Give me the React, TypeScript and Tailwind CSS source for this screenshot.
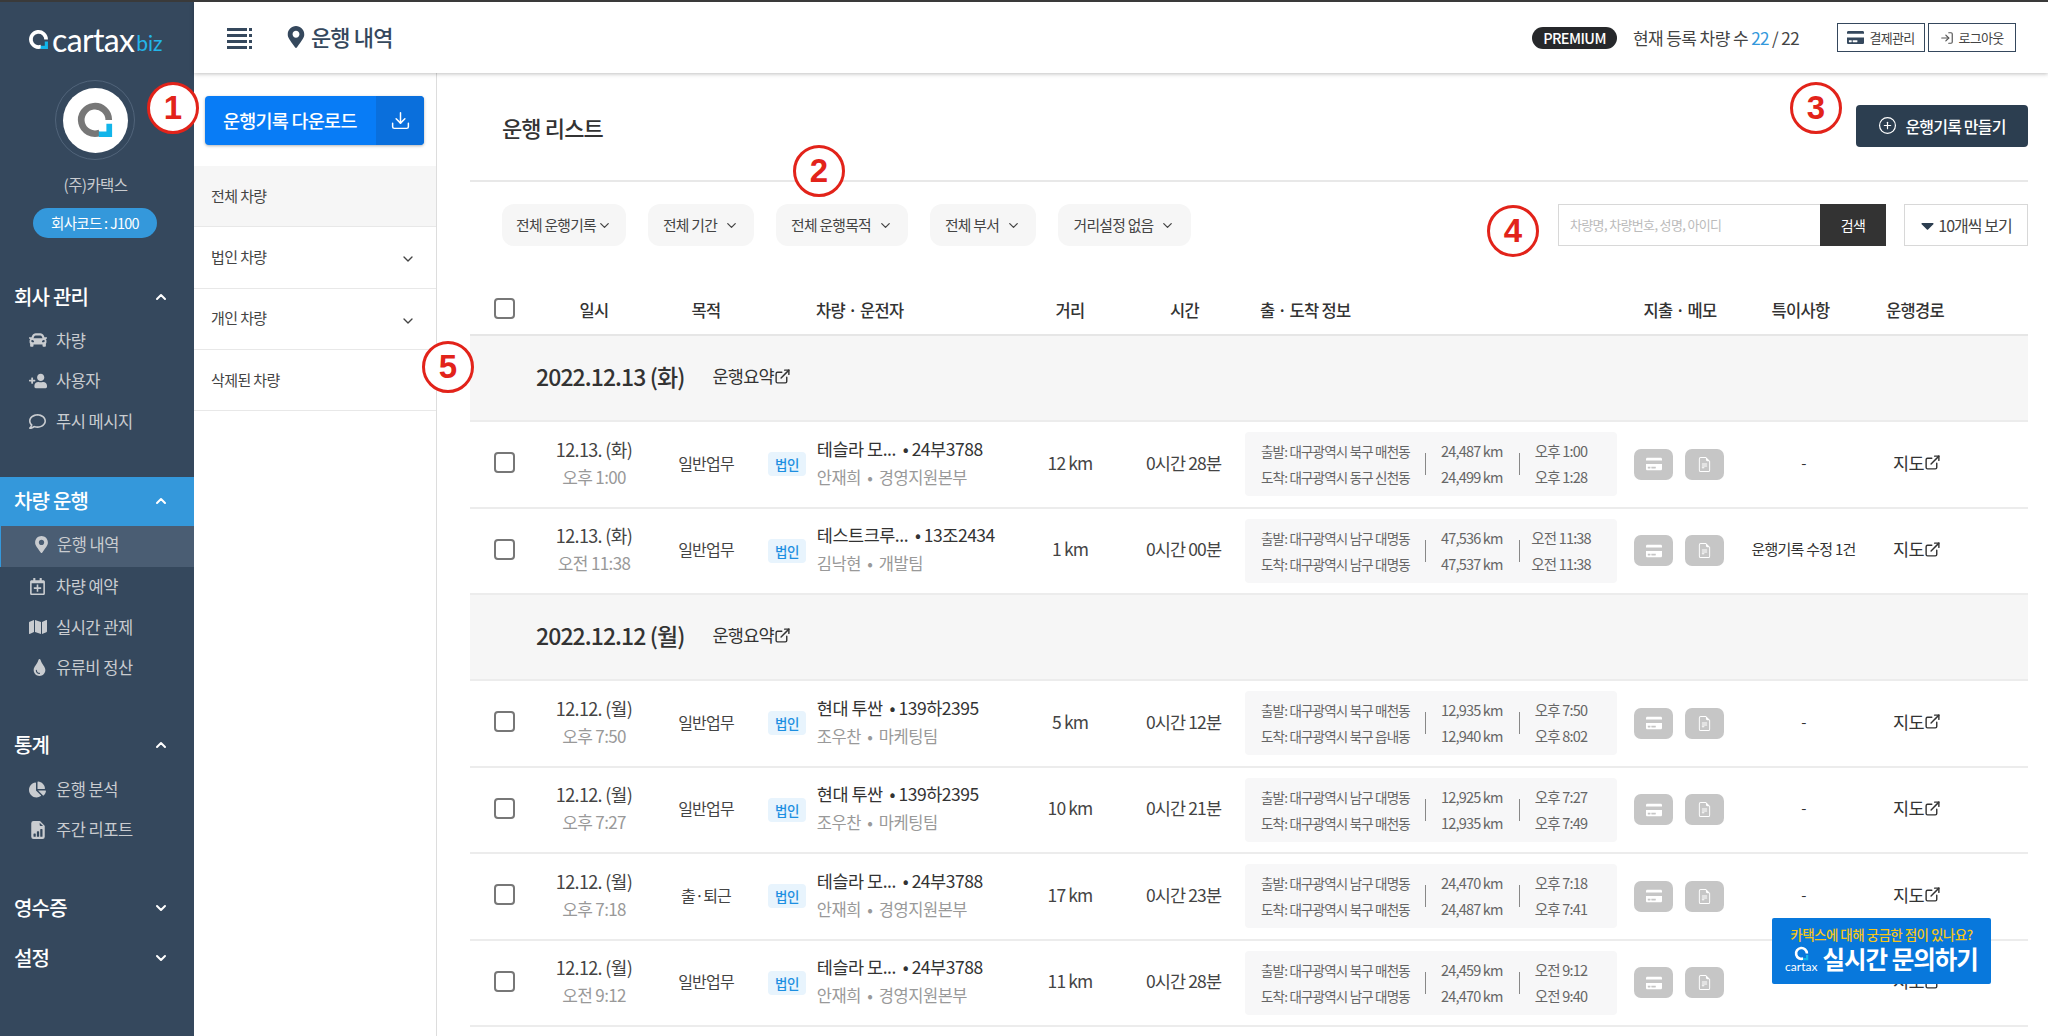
import type { ReactNode } from "react";
import { FiChevronDown, FiChevronUp, FiDownload, FiExternalLink, FiLogIn, FiPlusCircle } from "react-icons/fi";
import { FaCar, FaCaretDown, FaChartPie, FaCreditCard, FaMap, FaMapMarkerAlt, FaRegCalendarPlus, FaRegComment, FaTint, FaUserPlus } from "react-icons/fa";
import { BsFileEarmarkBarGraphFill, BsFileEarmarkText } from "react-icons/bs";

function LogoMark({ size, ring = "#ffffff", square = "#12b5ea" }: { size: number; ring?: string; square?: string }) {
  return (
    <svg width={size} height={size} viewBox="0 0 40 40" fill="none">
      <path d="M25 33.5A14.5 14.5 0 1 1 34.5 20" stroke={ring} strokeWidth="7" />
      <path d="M38 24v14H24v-6h8v-8z" fill={square} />
    </svg>
  );
}

function SideGroup({ title, open, className, children }: { title: string; open: boolean; className?: string; children?: ReactNode }) {
  return (
    <div className={className}>
      <div className="flex h-[40px] items-center justify-between pl-[14px] pr-[25px] text-[20px] font-medium tracking-[-0.04em] text-white">
        <span>{title}</span>
        {open ? <FiChevronUp size={16} strokeWidth={3} /> : <FiChevronDown size={16} strokeWidth={3} />}
      </div>
      {children}
    </div>
  );
}

function SideItem({ icon, label, active }: { icon: ReactNode; label: string; active?: boolean }) {
  return (
    <div className={`flex h-[40.5px] items-center pl-[29px] text-[16.5px] tracking-[-0.03em] text-[#c9ccd0] ${active ? "border-l border-[#3498db] bg-[#4a5d73] pb-[3px]" : ""}`}>
      <span className="flex w-[27px] shrink-0 items-center">{icon}</span>
      <span>{label}</span>
    </div>
  );
}

function Sidebar() {
  return (
    <aside className="flex w-[194px] shrink-0 flex-col bg-[#35485d]">
      <div className="flex h-[78px] items-center pb-[3px] pl-[28px]">
        <LogoMark size={21} />
        <span className="ml-[3px] font-['Lato',sans-serif] text-[32px] leading-none tracking-[-0.02em] text-white">cartax</span>
        <span className="ml-[2px] mt-[6px] font-['Lato',sans-serif] text-[21px] leading-none text-[#24b4e8]">biz</span>
      </div>
      <div className="flex justify-center pr-[4px]">
        <div className="flex h-[80px] w-[80px] items-center justify-center rounded-full border border-[#51647a]">
          <div className="flex h-[65px] w-[65px] items-center justify-center rounded-full bg-white">
            <LogoMark size={38} ring="#777777" />
          </div>
        </div>
      </div>
      <div className="mt-[13px] pr-[3px] text-center text-[15.5px] leading-[22px] tracking-[-0.04em] text-[#c9ccd0]">(주)카택스</div>
      <div className="ml-[33px] mr-[37px] mt-[13px] flex h-[30px] items-center justify-center rounded-full bg-[#3498db] text-[14.5px] tracking-[-0.05em] text-white">회사코드 : J100</div>
      <SideGroup title="회사 관리" open className="mt-[39px]">
        <div className="mt-[3px]">
          <SideItem icon={<FaCar size={18} />} label="차량" />
          <SideItem icon={<FaUserPlus size={18} className="-scale-x-100" />} label="사용자" />
          <SideItem icon={<FaRegComment size={17} />} label="푸시 메시지" />
        </div>
      </SideGroup>
      <div className="mt-[35.5px]">
        <div className="flex h-[49px] items-center justify-between bg-[#3498db] pb-[2px] pl-[14px] pr-[25px] text-[20px] font-medium tracking-[-0.04em] text-white">
          <span>차량 운행</span>
          <FiChevronUp size={16} strokeWidth={3} />
        </div>
        <SideItem active icon={<FaMapMarkerAlt size={17} className="ml-[3px]" />} label="운행 내역" />
        <SideItem icon={<FaRegCalendarPlus size={17} />} label="차량 예약" />
        <SideItem icon={<FaMap size={18} />} label="실시간 관제" />
        <SideItem icon={<FaTint size={17} className="ml-[2px]" />} label="유류비 정산" />
      </div>
      <SideGroup title="통계" open className="mt-[37px]">
        <div className="mt-[4px]">
          <SideItem icon={<FaChartPie size={17} />} label="운행 분석" />
          <SideItem icon={<BsFileEarmarkBarGraphFill size={18} />} label="주간 리포트" />
        </div>
      </SideGroup>
      <SideGroup title="영수증" open={false} className="mt-[38px]" />
      <SideGroup title="설정" open={false} className="mt-[10px]" />
    </aside>
  );
}

function TopBar() {
  return (
    <header className="relative z-10 flex h-[71px] shrink-0 items-center bg-white pl-[33px] pr-[32px] shadow-[0_1px_4px_rgba(0,0,0,0.25)]">
      <svg width="26" height="22" viewBox="0 0 26 22" fill="#35485d">
        <rect x="0" y="1" width="20" height="3" />
        <rect x="0" y="7" width="20" height="3" />
        <rect x="0" y="13" width="20" height="3" />
        <rect x="0" y="19" width="20" height="3" />
        <rect x="22" y="1" width="3" height="3" />
        <rect x="22" y="7" width="3" height="3" />
        <rect x="22" y="13" width="3" height="3" />
        <rect x="22" y="19" width="3" height="3" />
      </svg>
      <FaMapMarkerAlt size={22} className="ml-[32px] mb-[2px] text-[#35485d]" />
      <span className="mb-[2px] ml-[4px] text-[22px] font-medium tracking-[-0.04em] text-[#35485d]">운행 내역</span>
      <div className="ml-auto flex h-[22px] w-[85px] items-center justify-center rounded-full bg-[#26282b] text-[14.5px] font-medium tracking-[-0.04em] text-white">PREMIUM</div>
      <div className="ml-[16px] w-[190px] text-[17px] tracking-[-0.035em] text-[#444]">
        현재 등록 차량 수 <span className="text-[#3498db]">22</span> / 22
      </div>
      <div className="ml-[14px] flex h-[29px] w-[88px] items-center justify-center gap-[5px] border border-[#35485d] text-[13px] tracking-[-0.05em] text-[#444]">
        <FaCreditCard size={17} className="text-[#35485d]" />
        결제관리
      </div>
      <div className="ml-[3px] flex h-[29px] w-[88px] items-center justify-center gap-[4px] border border-[#35485d] text-[13px] tracking-[-0.05em] text-[#444]">
        <FiLogIn size={14} className="text-[#555]" />
        로그아웃
      </div>
    </header>
  );
}

function VehiclePanel() {
  const rows = [
    { label: "전체 차량", active: true },
    { label: "법인 차량", arrow: true },
    { label: "개인 차량", arrow: true },
    { label: "삭제된 차량" },
  ];
  return (
    <div className="w-[243px] shrink-0 border-r border-[#dddddd] bg-white pt-[23px]">
      <div className="ml-[11px] flex h-[49px] w-[219px] overflow-hidden rounded-[4px] bg-[#087cf6] text-white shadow-[0_1px_3px_rgba(0,0,0,0.3)]">
        <div className="flex flex-1 items-center pl-[18px] text-[18.5px] font-medium tracking-[-0.04em]">운행기록 다운로드</div>
        <div className="flex w-[48px] items-center justify-center bg-[#0a6fdc]">
          <FiDownload size={21} strokeWidth={1.7} />
        </div>
      </div>
      <div className="mt-[21px]">
        {rows.map((r) => (
          <div key={r.label} className={`flex h-[61.3px] items-center justify-between border-b border-[#e8e8e8] pl-[17px] pr-[20px] text-[15px] tracking-[-0.04em] text-[#444] ${r.active ? "bg-[#f6f6f6]" : ""}`}>
            <span>{r.label}</span>
            {r.arrow && <FiChevronDown size={16} className="mt-[4px]" />}
          </div>
        ))}
      </div>
    </div>
  );
}

function Pill({ label, width, gap }: { label: string; width: string; gap: string }) {
  return (
    <div className={`flex h-[42px] items-center justify-center rounded-[12px] bg-[#f6f6f6] text-[14.8px] tracking-[-0.05em] text-[#444] ${width} ${gap}`}>
      {label}
      <FiChevronDown size={15} />
    </div>
  );
}

function Check() {
  return <div className="h-[21px] w-[21px] rounded-[4px] border-2 border-[#777777] bg-white" />;
}

type Trip = {
  date: string; time: string; purpose: string; car: string; driver: string; dist: string; dur: string;
  from: string; to: string; km1: string; km2: string; t1: string; t2: string; note: string;
};

function MapLink({ label }: { label: string }) {
  return (
    <span className="inline-flex items-center text-[17.5px] tracking-[-0.04em] text-[#333]">
      {label}
      <FiExternalLink size={17} strokeWidth={2} />
    </span>
  );
}

function TripRow({ t }: { t: Trip }) {
  return (
    <div className="flex h-[86.5px] items-center border-b-2 border-[#ececec] pb-[3px]">
      <div className="flex w-[68px] shrink-0 justify-center"><Check /></div>
      <div className="w-[112px] shrink-0 text-center tracking-[-0.04em]">
        <div className="text-[18px] leading-[28px] text-[#444]">{t.date}</div>
        <div className="text-[17px] leading-[28px] text-[#999]">{t.time}</div>
      </div>
      <div className="w-[112px] shrink-0 text-center text-[16px] tracking-[-0.05em] text-[#444]">{t.purpose}</div>
      <div className="flex w-[254px] shrink-0 items-center">
        <span className="ml-[6px] mt-[3px] rounded-[4px] bg-[#e8f4fd] px-[7px] py-[2px] text-[13.5px] font-medium tracking-[-0.04em] text-[#1d8fe1]">법인</span>
        <div className="ml-[11px] tracking-[-0.03em]">
          <div className="text-[17.5px] leading-[28px] text-[#333]">{t.car}</div>
          <div className="text-[16.5px] leading-[28px] text-[#999]">{t.driver}</div>
        </div>
      </div>
      <div className="w-[108px] shrink-0 text-center text-[17.5px] tracking-[-0.05em] text-[#444]">{t.dist}</div>
      <div className="w-[121px] shrink-0 pr-[2px] text-center text-[17.5px] tracking-[-0.05em] text-[#444]">{t.dur}</div>
      <div className="mt-[3px] flex h-[64px] w-[372px] shrink-0 items-center rounded-[4px] bg-[#f7f7f8] pl-[16px] text-[13.5px] tracking-[-0.06em] text-[#666]">
        <div className="w-[164px] leading-[26px]">
          <div>출발: {t.from}</div>
          <div>도착: {t.to}</div>
        </div>
        <div className="h-[22px] w-px bg-[#888]" />
        <div className="w-[93px] pl-[15px] text-[14.5px] leading-[26px]">
          <div>{t.km1}</div>
          <div>{t.km2}</div>
        </div>
        <div className="h-[22px] w-px bg-[#888]" />
        <div className="w-[82px] text-center text-[14.5px] leading-[26px]">
          <div>{t.t1}</div>
          <div>{t.t2}</div>
        </div>
      </div>
      <div className="ml-[17px] mt-[3px] flex w-[96px] shrink-0 gap-[12px]">
        <div className="flex h-[31px] w-[39px] items-center justify-center rounded-[7px] bg-[#c6c6c6] text-white"><FaCreditCard size={16} /></div>
        <div className="flex h-[31px] w-[39px] items-center justify-center rounded-[7px] bg-[#c6c6c6] text-white"><BsFileEarmarkText size={15} /></div>
      </div>
      <div className="w-[147px] shrink-0 text-center text-[15px] tracking-[-0.05em] text-[#333]">{t.note}</div>
      <div className="w-[80px] shrink-0 text-center"><MapLink label="지도" /></div>
    </div>
  );
}

function DateRow({ date }: { date: string }) {
  return (
    <div className="flex h-[86px] items-center border-b-2 border-[#ececec] bg-[#f6f6f6] pb-[4px] pl-[66px]">
      <span className="text-[23px] font-medium tracking-[-0.04em] text-[#333]">{date}</span>
      <span className="ml-[28px]"><MapLink label="운행요약" /></span>
    </div>
  );
}

const first: Trip[] = [
  { date: "12.13. (화)", time: "오후 1:00", purpose: "일반업무", car: "테슬라 모...\u00a0\u00a0• 24부3788", driver: "안재희 \u00a0•\u00a0 경영지원본부", dist: "12 km", dur: "0시간 28분", from: "대구광역시 북구 매천동", to: "대구광역시 동구 신천동", km1: "24,487 km", km2: "24,499 km", t1: "오후 1:00", t2: "오후 1:28", note: "-" },
  { date: "12.13. (화)", time: "오전 11:38", purpose: "일반업무", car: "테스트크루...\u00a0\u00a0• 13조2434", driver: "김낙현 \u00a0•\u00a0 개발팀", dist: "1 km", dur: "0시간 00분", from: "대구광역시 남구 대명동", to: "대구광역시 남구 대명동", km1: "47,536 km", km2: "47,537 km", t1: "오전 11:38", t2: "오전 11:38", note: "운행기록 수정 1건" },
];

const second: Trip[] = [
  { date: "12.12. (월)", time: "오후 7:50", purpose: "일반업무", car: "현대 투싼 \u00a0• 139하2395", driver: "조우찬 \u00a0•\u00a0 마케팅팀", dist: "5 km", dur: "0시간 12분", from: "대구광역시 북구 매천동", to: "대구광역시 북구 읍내동", km1: "12,935 km", km2: "12,940 km", t1: "오후 7:50", t2: "오후 8:02", note: "-" },
  { date: "12.12. (월)", time: "오후 7:27", purpose: "일반업무", car: "현대 투싼 \u00a0• 139하2395", driver: "조우찬 \u00a0•\u00a0 마케팅팀", dist: "10 km", dur: "0시간 21분", from: "대구광역시 남구 대명동", to: "대구광역시 북구 매천동", km1: "12,925 km", km2: "12,935 km", t1: "오후 7:27", t2: "오후 7:49", note: "-" },
  { date: "12.12. (월)", time: "오후 7:18", purpose: "출·퇴근", car: "테슬라 모...\u00a0\u00a0• 24부3788", driver: "안재희 \u00a0•\u00a0 경영지원본부", dist: "17 km", dur: "0시간 23분", from: "대구광역시 남구 대명동", to: "대구광역시 북구 매천동", km1: "24,470 km", km2: "24,487 km", t1: "오후 7:18", t2: "오후 7:41", note: "-" },
  { date: "12.12. (월)", time: "오전 9:12", purpose: "일반업무", car: "테슬라 모...\u00a0\u00a0• 24부3788", driver: "안재희 \u00a0•\u00a0 경영지원본부", dist: "11 km", dur: "0시간 28분", from: "대구광역시 북구 매천동", to: "대구광역시 남구 대명동", km1: "24,459 km", km2: "24,470 km", t1: "오전 9:12", t2: "오전 9:40", note: "-" },
];

function TripList() {
  return (
    <main className="min-w-0 flex-1 pl-[33px] pr-[20px]">
      <div className="flex h-[109px] items-center justify-between border-b-2 border-[#e8e8e8] pb-[2px]">
        <h2 className="ml-[32px] pt-[3px] text-[22px] font-medium tracking-[-0.04em] text-[#333]">운행 리스트</h2>
        <div className="flex h-[42px] w-[172px] items-center justify-center gap-[8px] rounded-[4px] bg-[#2c3e50] text-[16px] font-medium tracking-[-0.05em] text-white">
          <FiPlusCircle size={19} strokeWidth={1.5} />
          운행기록 만들기
        </div>
      </div>
      <div className="flex items-center pl-[32px] pt-[22px]">
        <div className="flex gap-[22px]">
          <Pill label="전체 운행기록" width="w-[124px]" gap="gap-[1px]" />
          <Pill label="전체 기간" width="w-[106px]" gap="gap-[7px]" />
          <Pill label="전체 운행목적" width="w-[132px]" gap="gap-[7px]" />
          <Pill label="전체 부서" width="w-[106px]" gap="gap-[7px]" />
          <Pill label="거리설정 없음" width="w-[133px]" gap="gap-[7px]" />
        </div>
        <div className="ml-auto flex h-[42px] w-[328px] border border-[#d8d8d8]">
          <div className="flex flex-1 items-center pl-[11px] text-[13px] tracking-[-0.05em] text-[#bbbbbb]">차량명, 차량번호, 성명, 아이디</div>
          <div className="-my-px -mr-px flex w-[66px] items-center justify-center bg-[#333333] text-[14px] tracking-[-0.04em] text-white">검색</div>
        </div>
        <div className="ml-[18px] flex h-[42px] w-[124px] items-center justify-center border border-[#d8d8d8] pr-[3px] text-[16px] tracking-[-0.06em] text-[#444]">
          <FaCaretDown size={21} className="text-[#2c3e50]" />
          10개씩 보기
        </div>
      </div>
      <div className="mt-[32px] flex h-[58px] items-center border-b-2 border-[#e6e6e6] pt-[8px] text-[16.5px] font-medium tracking-[-0.04em] text-[#333]">
        <div className="flex w-[68px] justify-center pb-[3px]"><Check /></div>
        <div className="w-[112px] text-center">일시</div>
        <div className="w-[112px] text-center">목적</div>
        <div className="w-[254px] pl-[54px]">차량 · 운전자</div>
        <div className="w-[108px] text-center">거리</div>
        <div className="w-[121px] text-center">시간</div>
        <div className="w-[389px] pl-[15px]">출 · 도착 정보</div>
        <div className="w-[92px] text-center">지출 · 메모</div>
        <div className="w-[149px] text-center">특이사항</div>
        <div className="w-[80px] text-center">운행경로</div>
      </div>
      <DateRow date="2022.12.13 (화)" />
      {first.map((t) => <TripRow key={t.time} t={t} />)}
      <DateRow date="2022.12.12 (월)" />
      {second.map((t) => <TripRow key={t.time} t={t} />)}
    </main>
  );
}

function Callout({ n, className }: { n: number; className: string }) {
  return (
    <div className={`absolute z-20 flex h-[52px] w-[52px] items-center justify-center rounded-full border-[3px] border-[#e2231a] bg-white font-['Liberation_Sans',sans-serif] text-[33px] font-bold text-[#e2231a] ${className}`}>
      {n}
    </div>
  );
}

export default function App() {
  return (
    <div className="relative flex h-screen overflow-hidden border-t-2 border-[#3a3a3a] bg-white font-['Noto_Sans_CJK_KR','Noto_Sans',sans-serif]">
      <Sidebar />
      <div className="flex min-w-0 flex-1 flex-col">
        <TopBar />
        <div className="flex min-h-0 flex-1">
          <VehiclePanel />
          <TripList />
        </div>
      </div>
      <Callout n={1} className="left-[147px] top-[80px]" />
      <Callout n={2} className="left-[793px] top-[143px]" />
      <Callout n={3} className="left-[1790px] top-[80px]" />
      <Callout n={4} className="left-[1487px] top-[203px]" />
      <Callout n={5} className="left-[422px] top-[339px]" />
      <div className="absolute left-[1772px] top-[916px] z-20 flex h-[66px] w-[219px] flex-col rounded-[2px] bg-[#0878dc] pt-[7px] text-center">
        <div className="text-[13.5px] font-medium leading-[18px] tracking-[-0.04em] text-[#f5c518]">카택스에 대해 궁금한 점이 있나요?</div>
        <div className="flex items-center justify-center gap-[5px]">
          <div className="flex flex-col items-center">
            <LogoMark size={15} />
            <span className="font-['Lato',sans-serif] text-[12px] leading-[12px] text-white">cartax</span>
          </div>
          <span className="text-[24.5px] font-bold leading-[32px] tracking-[-0.04em] text-white">실시간 문의하기</span>
        </div>
      </div>
    </div>
  );
}
